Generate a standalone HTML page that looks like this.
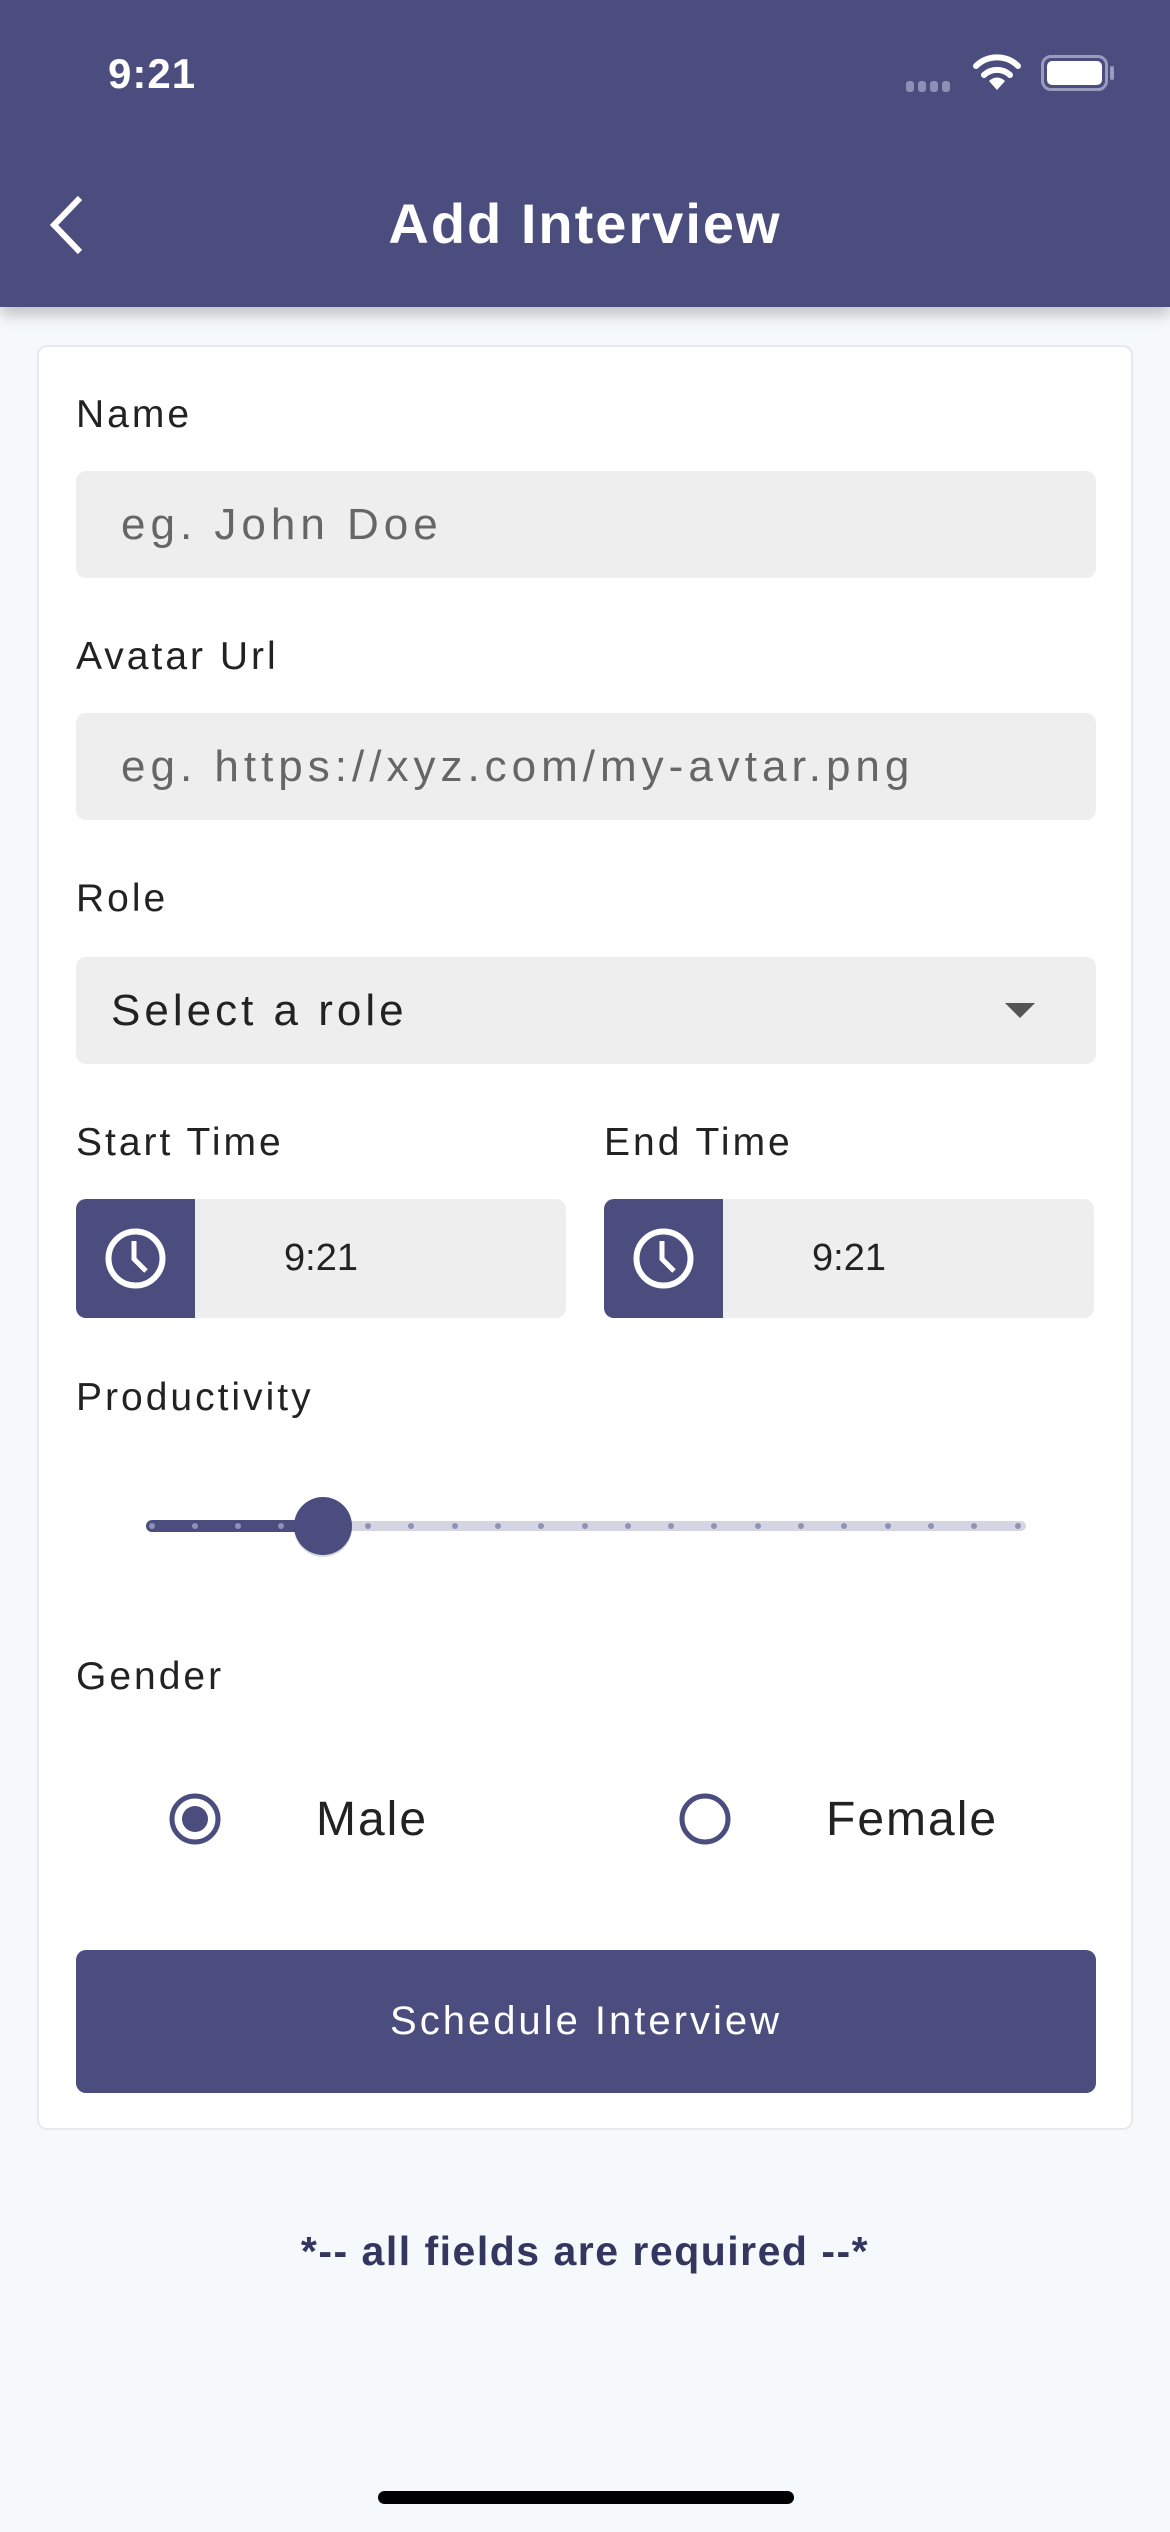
<!DOCTYPE html><html><head><meta charset="utf-8"><style>
*{margin:0;padding:0;box-sizing:border-box}
body{width:1170px;height:2532px;background:#f6f9fc;font-family:"Liberation Sans",sans-serif;position:relative;overflow:hidden}
.a{position:absolute}
.hdr{left:0;top:0;width:1170px;height:307px;background:#4a4d7e;box-shadow:0 8px 14px rgba(0,0,0,.22)}
.card{left:37px;top:345px;width:1096px;height:1785px;background:#fff;border:2px solid #e6e9ee;border-radius:10px}
.lbl{font-size:39px;color:#222;line-height:44px;letter-spacing:3px}
.inp{left:76px;width:1020px;height:107px;background:#eee;border-radius:10px;font-size:44px;color:#666;line-height:107px;padding-left:45px;letter-spacing:5px;white-space:nowrap}
.tb{top:1199px;height:119px;width:490px;background:#eee;border-radius:10px;overflow:hidden}
.tb .ic{position:absolute;left:0;top:0;width:119px;height:119px;background:#4a4d7e}
.tb span{position:absolute;top:0;line-height:119px;font-size:38px;color:#222}
</style></head><body>
<div class="a hdr"></div>
<div class="a" style="left:108px;top:50px;font-size:42px;font-weight:bold;color:#fff;letter-spacing:1px">9:21</div>
<div class="a" style="left:906px;top:80px;width:48px;height:12px">
<svg width="48" height="12"><g fill="#8e90b3"><rect x="0" y="0" width="8" height="11" rx="3"/><rect x="12" y="0" width="8" height="11" rx="3"/><rect x="24" y="0" width="8" height="11" rx="3"/><rect x="36" y="0" width="8" height="11" rx="3"/></g></svg></div>
<svg class="a" style="left:972px;top:52px" width="50" height="40" viewBox="0 0 50 40"><path d="M4 14 A30 30 0 0 1 46 14" stroke="#fff" stroke-width="6" fill="none" stroke-linecap="round"/><path d="M12 23 A19 19 0 0 1 38 23" stroke="#fff" stroke-width="6" fill="none" stroke-linecap="round"/><path d="M25 38 L17 29 A11 11 0 0 1 33 29 Z" fill="#fff"/></svg>
<div class="a" style="left:1041px;top:55px;width:67px;height:36px;border:3px solid #9a9cbe;border-radius:10px;padding:3px"><div style="width:100%;height:100%;background:#fff;border-radius:5px"></div></div>
<div class="a" style="left:1110px;top:66px;width:4px;height:14px;background:#9a9cbe;border-radius:2px"></div>
<svg class="a" style="left:44px;top:194px" width="44" height="62"><path d="M36 4 L10 31 L36 58" stroke="#fff" stroke-width="6" fill="none"/></svg>
<div class="a" style="left:0;width:1170px;top:190px;text-align:center;font-size:56px;font-weight:bold;color:#fff;line-height:68px;letter-spacing:2px">Add Interview</div>
<div class="a card"></div>
<div class="a lbl" style="left:76px;top:393px">Name</div>
<div class="a inp" style="top:471px">eg. John Doe</div>
<div class="a lbl" style="left:76px;top:635px">Avatar Url</div>
<div class="a inp" style="top:713px">eg. https://xyz.com/my-avtar.png</div>
<div class="a lbl" style="left:76px;top:877px">Role</div>
<div class="a inp" style="top:957px;color:#222;padding-left:35px;font-size:44px;letter-spacing:4px">Select a role</div>
<svg class="a" style="left:1005px;top:1003px" width="30" height="16"><path d="M0 0 L30 0 L15 15Z" fill="#555"/></svg>
<div class="a lbl" style="left:76px;top:1121px">Start Time</div>
<div class="a lbl" style="left:604px;top:1121px">End Time</div>
<div class="a tb" style="left:76px"><div class="ic"><svg width="119" height="119"><circle cx="59.5" cy="59.5" r="27" stroke="#fff" stroke-width="6" fill="none"/><path d="M58 42 V60 L70 72" stroke="#fff" stroke-width="5" fill="none"/></svg></div><span style="left:208px">9:21</span></div>
<div class="a tb" style="left:604px"><div class="ic"><svg width="119" height="119"><circle cx="59.5" cy="59.5" r="27" stroke="#fff" stroke-width="6" fill="none"/><path d="M58 42 V60 L70 72" stroke="#fff" stroke-width="5" fill="none"/></svg></div><span style="left:208px">9:21</span></div>
<div class="a lbl" style="left:76px;top:1376px">Productivity</div>
<svg class="a" style="left:140px;top:1490px" width="900" height="80">
<rect x="6" y="31" width="880" height="10" rx="5" fill="#d4d5e3"/>
<rect x="6" y="30" width="180" height="12" rx="6" fill="#4a4d7e"/>
<g fill="#8f92b5">
<circle cx="12" cy="36" r="3"/><circle cx="55" cy="36" r="3"/><circle cx="98" cy="36" r="3"/><circle cx="141" cy="36" r="3"/><circle cx="228" cy="36" r="3"/><circle cx="271" cy="36" r="3"/><circle cx="315" cy="36" r="3"/><circle cx="358" cy="36" r="3"/><circle cx="401" cy="36" r="3"/><circle cx="445" cy="36" r="3"/><circle cx="488" cy="36" r="3"/><circle cx="531" cy="36" r="3"/><circle cx="574" cy="36" r="3"/><circle cx="618" cy="36" r="3"/><circle cx="661" cy="36" r="3"/><circle cx="704" cy="36" r="3"/><circle cx="748" cy="36" r="3"/><circle cx="791" cy="36" r="3"/><circle cx="834" cy="36" r="3"/><circle cx="878" cy="36" r="3"/></g>
<circle cx="183" cy="38" r="29" fill="rgba(0,0,0,.15)"/>
<circle cx="183" cy="36" r="29" fill="#4a4d7e"/>
</svg>
<div class="a lbl" style="left:76px;top:1655px">Gender</div>
<svg class="a" style="left:167px;top:1791px" width="56" height="56"><circle cx="28" cy="28" r="23" stroke="#4a4d7e" stroke-width="5" fill="none"/><circle cx="28" cy="28" r="13" fill="#4a4d7e"/></svg>
<div class="a" style="left:316px;top:1792px;font-size:48px;color:#222;line-height:56px;letter-spacing:2px">Male</div>
<svg class="a" style="left:677px;top:1791px" width="56" height="56"><circle cx="28" cy="28" r="23" stroke="#4a4d7e" stroke-width="5" fill="none"/></svg>
<div class="a" style="left:826px;top:1792px;font-size:48px;color:#222;line-height:56px;letter-spacing:2px">Female</div>
<div class="a" style="left:76px;top:1950px;width:1020px;height:143px;background:#4a4d7e;border-radius:10px;color:#fff;font-size:40px;line-height:143px;text-align:center;letter-spacing:3px">Schedule Interview</div>
<div class="a" style="left:0;width:1170px;top:2226px;text-align:center;font-size:41px;font-weight:bold;color:#33365f;line-height:50px;letter-spacing:1.5px">*-- all fields are required --*</div>
<div class="a" style="left:378px;top:2491px;width:416px;height:13px;background:#000;border-radius:7px"></div>
</body></html>
